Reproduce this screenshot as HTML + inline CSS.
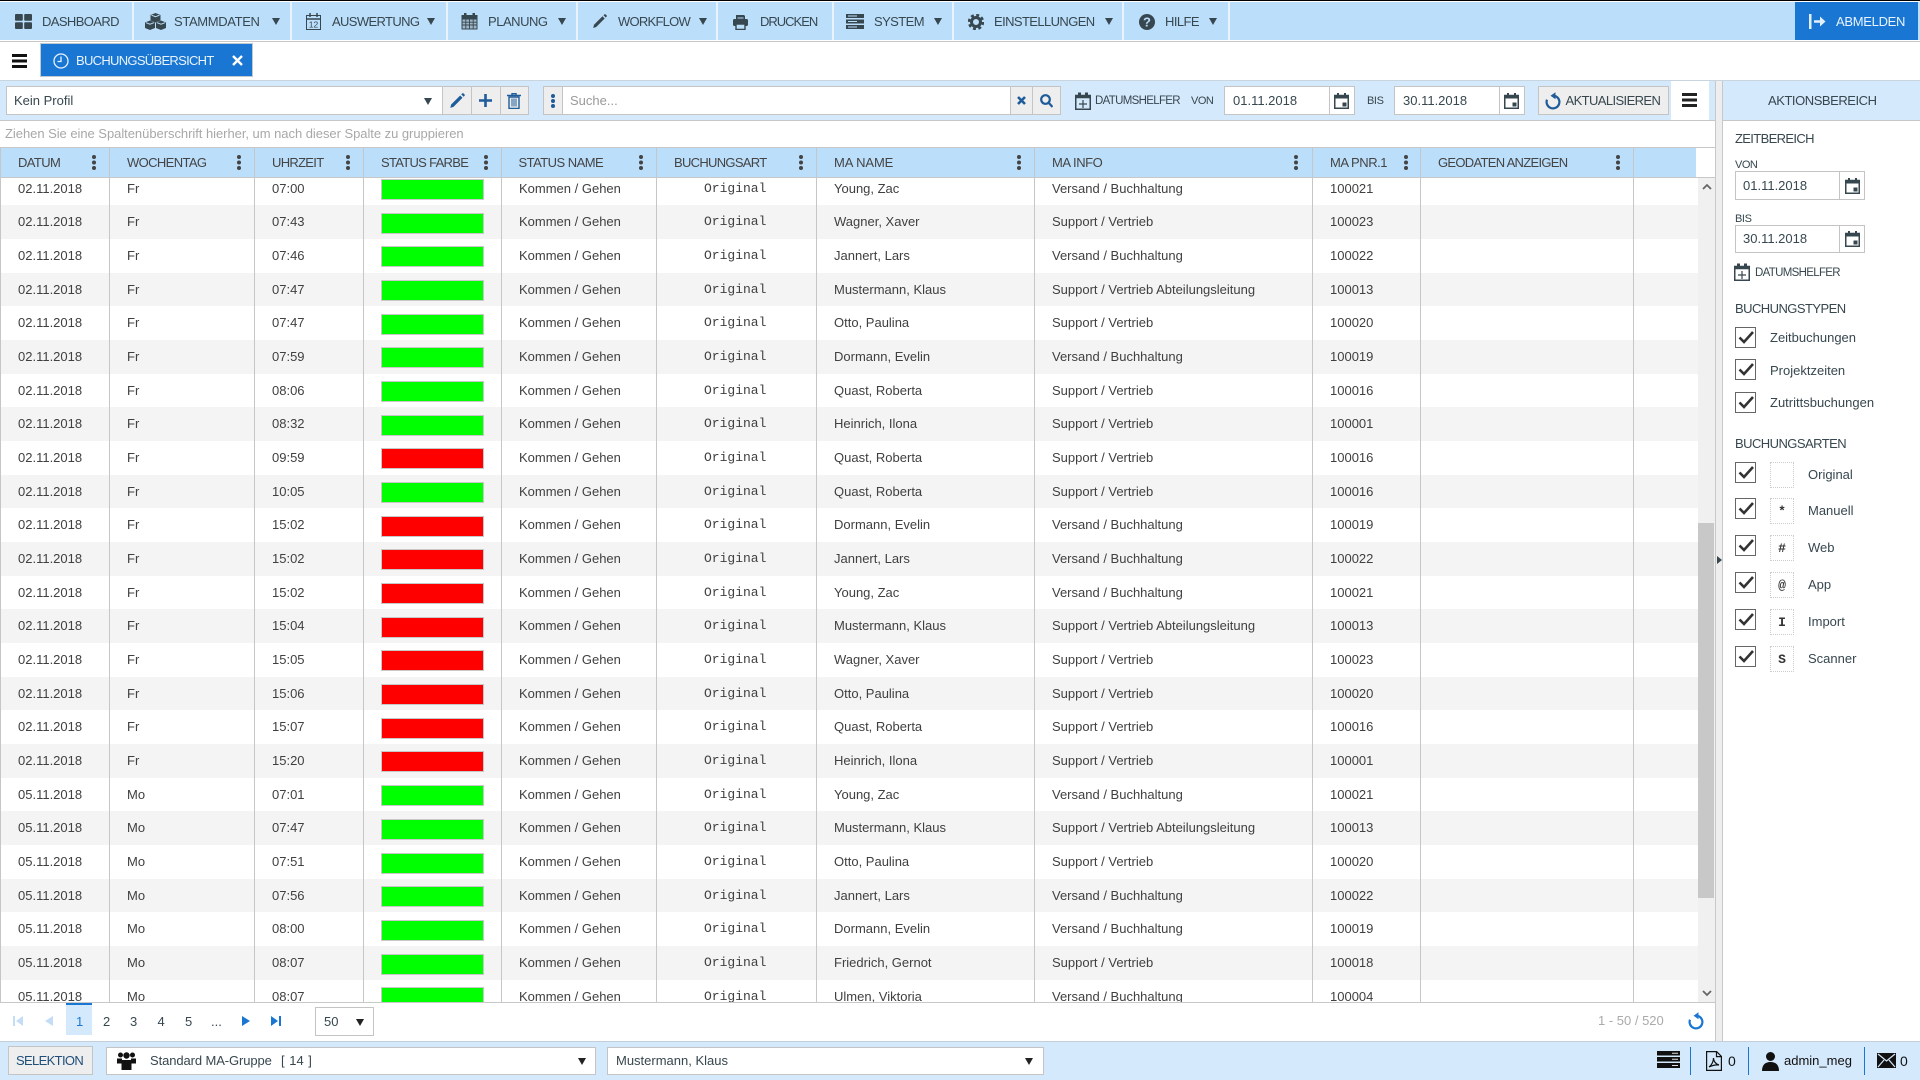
<!DOCTYPE html>
<html lang="de"><head><meta charset="utf-8"><title>Buchungsübersicht</title>
<style>
html,body{margin:0;padding:0;background:#fff}
body{position:relative;width:1920px;height:1080px;overflow:hidden;font:13px/20px "Liberation Sans",sans-serif;color:#404040}
.a,.t,.tri,svg.a,.r{position:absolute}
.t{white-space:nowrap;line-height:20px}
.c{letter-spacing:-.38px;color:#37474f;top:12px}
.h{letter-spacing:-.7px;color:#444}
.box{background:#fff;border:1px solid #c4c4c4;box-sizing:border-box}
.btn{background:#eee;border:1px solid #c4c4c4;box-sizing:border-box}
.tri{width:0;height:0;margin:1px 0 0 1px;border-left:4px solid transparent;border-right:4px solid transparent;border-top:7px solid #37474f}
.sep{position:absolute;top:2px;width:2px;height:38px;background:#e8f3fd}
.g{display:grid;grid-template-columns:109px 145px 109px 138px 155px 160px 218px 278px 108px 213px 65px;position:absolute;left:0;width:1698px}
.g>div{border-left:1px solid #c6c6c6;padding-left:17px;white-space:nowrap;overflow:hidden;box-sizing:border-box;height:100%}
.r{height:33.68px;flex:none;line-height:34.5px;width:1698px;left:0}
.r:nth-child(even){background:#f4f4f4}
.r>div:nth-child(4) b{display:block;margin:7.4px 0 0 0;width:103px;height:21px;box-sizing:border-box;border:1px solid #c8c8c8}
.r>div:nth-child(6){font-family:"Liberation Mono",monospace;padding-left:47px;font-size:13px}
.on b{background:#0f0}.off b{background:#f00}
.k{position:absolute;width:4px;height:4px;border-radius:2px;background:#444;box-shadow:0 5.5px 0 #444,0 11px 0 #444}
.cb{position:absolute;left:1735px;width:21px;height:21px;border:1.5px solid #666;box-sizing:border-box;background:#fff}
.cb svg{position:absolute;left:1px;top:0;overflow:visible}
.dot{position:absolute;left:1770px;width:24px;height:26px;border:1px dotted #ccc;box-sizing:border-box;text-align:center;font:bold 13px/25px "Liberation Mono",monospace;color:#333}
</style></head><body>
<svg width="0" height="0" style="position:absolute"><defs>
<symbol id="cal" viewBox="0 0 15 16"><path d="M.75 2.5h13.5v12.75H.75z" fill="none" stroke="#37474f" stroke-width="1.5"/><path d="M1 2h13v3.5H1zM3 0h2v3H3zM10 0h2v3h-2zM8.5 9.5h4v4h-4z" fill="#37474f"/></symbol>
<symbol id="calp" viewBox="0 0 16 18"><path d="M.75 3.5h14.5v13.75H.75z" fill="none" stroke="#37474f" stroke-width="1.5"/><path d="M1 3h14v3.2H1zM3 .5h3v4H3zM10 .5h3v4h-3zM7.4 8h1.2v3.4H12v1.2H8.6V16H7.4v-3.4H4v-1.2h3.4z" fill="#37474f"/></symbol>
<symbol id="ck" viewBox="0 0 18 18"><path d="M2.5 9.5l4.5 4.5L16 4" fill="none" stroke="#333" stroke-width="2.6"/></symbol>
<symbol id="ref" viewBox="0 0 16 18"><path d="M2 7.7A6.4 6.4 0 1 0 10 3.9" fill="none" stroke="currentColor" stroke-width="2.2"/><path d="M5.5 3.7L10.5 .2v7z" fill="currentColor"/></symbol>
</defs></svg>

<div class="a" style="left:0;top:0;width:1920px;height:1px;background:#000"></div>
<div class="a" style="left:0;top:2px;width:1920px;height:38px;background:#bbdefb"></div>
<div class="a" style="left:0;top:41px;width:1920px;height:1px;background:#c8c8c8"></div>
<div class="sep" style="left:132px"></div><div class="sep" style="left:290px"></div><div class="sep" style="left:446px"></div><div class="sep" style="left:576px"></div><div class="sep" style="left:716px"></div><div class="sep" style="left:832px"></div><div class="sep" style="left:952px"></div><div class="sep" style="left:1122px"></div><div class="sep" style="left:1228px"></div>

<svg class="a" style="left:15px;top:14px" width="17" height="15" viewBox="0 0 17 15" fill="#37474f"><rect width="7.8" height="6.8" rx="1"/><rect x="9.2" width="7.8" height="6.8" rx="1"/><rect y="8.2" width="7.8" height="6.8" rx="1"/><rect x="9.2" y="8.2" width="7.8" height="6.8" rx="1"/></svg>
<div class="t c" style="left:42px;letter-spacing:-.6px">DASHBOARD</div>
<svg class="a" style="left:145px;top:13px" width="21" height="17" viewBox="0 0 21 17" fill="#37474f"><path d="M10.5 0l5 2v5.500l-5 2-5-2V2z"/><path d="M5 7.500l5 2v5.500l-5 2-5-2V9.500z"/><path d="M16 7.500l5 2v5.500l-5 2-5-2V9.500z"/><path d="M6.500 2.200l4 1.500 4-1.500M1 9.700l4 1.500 4-1.500M12 9.700l4 1.500 4-1.500" stroke="#bbdefb" fill="none"/></svg>
<div class="t c" style="left:174px;letter-spacing:-.35px">STAMMDATEN</div><i class="tri" style="left:271px;top:17px"></i>
<svg class="a" style="left:306px;top:13px" width="15" height="17" viewBox="0 0 15 17" fill="none" stroke="#37474f"><rect x=".5" y="2.500" width="14" height="14"/><path d="M.5 6h14M4 0v4M11 0v4" stroke-width="1.500"/><text x="7.500" y="14.500" font-size="8.500" text-anchor="middle" fill="#37474f" stroke="none" font-family="Liberation Sans">12</text></svg>
<div class="t c" style="left:332px;letter-spacing:-.63px">AUSWERTUNG</div><i class="tri" style="left:426px;top:17px"></i>
<svg class="a" style="left:461px;top:13px" width="17" height="17" viewBox="0 0 17 17"><rect x=".5" y="2" width="16" height="14.500" fill="#37474f"/><path d="M3 0h2.500v4H3zM11.500 0H14v4h-2.500z" fill="#37474f"/><path d="M1.500 6.500h14v9h-14z" fill="#9fb5c8"/><path d="M1.500 9.200h14M1.500 12h14M4.800 6.500v9M8.500 6.500v9M12.200 6.500v9" stroke="#37474f" stroke-width=".9"/></svg>
<div class="t c" style="left:488px;letter-spacing:-.47px">PLANUNG</div><i class="tri" style="left:557px;top:17px"></i>
<svg class="a" style="left:592px;top:14px" width="15" height="15" viewBox="0 0 15 15" fill="#37474f"><path d="M10.500 2.300l2.200 2.200L4.200 13 1.200 14 2 10.800zM11.500 1.300l.8-.8a1 1 0 0 1 1.400 0l.8.8a1 1 0 0 1 0 1.400l-.8.8z"/></svg>
<div class="t c" style="left:618px;letter-spacing:-.75px">WORKFLOW</div><i class="tri" style="left:698px;top:17px"></i>
<svg class="a" style="left:733px;top:14px" width="15" height="16" viewBox="0 0 15 16" fill="#37474f"><path d="M3 1h8l1 1v3H3z"/><rect y="5" width="15" height="7" rx="1.500"/><path d="M3 10h9v5.500H3z" fill="#bbdefb" stroke="#37474f" stroke-width="1.400"/><path d="M4.500 4h6" stroke="#bbdefb"/></svg>
<div class="t c" style="left:760px;letter-spacing:-1px">DRUCKEN</div>
<svg class="a" style="left:846px;top:14px" width="18" height="15" viewBox="0 0 18 15"><path d="M0 0h18v4H0zM0 5.500h18v4H0zM0 11h18v4H0z" fill="#37474f"/><path d="M2 2h9M2 7.500h9M2 13h9" stroke="#bbdefb"/></svg>
<div class="t c" style="left:874px;letter-spacing:-.58px">SYSTEM</div><i class="tri" style="left:933px;top:17px"></i>
<svg class="a" style="left:968px;top:14px" width="16" height="16" viewBox="0 0 16 16"><circle cx="8" cy="8" r="4.500" fill="none" stroke="#37474f" stroke-width="3"/><circle cx="8" cy="8" r="7" fill="none" stroke="#37474f" stroke-width="2.400" stroke-dasharray="3 2.500"/></svg>
<div class="t c" style="left:994px;letter-spacing:-.6px">EINSTELLUNGEN</div><i class="tri" style="left:1104px;top:17px"></i>
<svg class="a" style="left:1139px;top:14px" width="16" height="16" viewBox="0 0 16 16"><circle cx="8" cy="8" r="8" fill="#37474f"/><text x="8" y="12.500" font-size="13" font-weight="bold" text-anchor="middle" fill="#bbdefb" font-family="Liberation Sans">?</text></svg>
<div class="t c" style="left:1165px;letter-spacing:-.56px">HILFE</div><i class="tri" style="left:1208px;top:17px"></i>

<div class="a" style="left:1795px;top:2px;width:123px;height:38px;background:#1976d2"></div>
<svg class="a" style="left:1809px;top:14px" width="17" height="15" viewBox="0 0 17 15" fill="#e3f0fc"><path d="M0 0h2.500v15H0zM5 6.300h6V2.500l5.500 5-5.500 5V8.700H5z"/></svg>
<div class="t" style="left:1836px;top:12px;color:#e8f3fd;letter-spacing:-.3px">ABMELDEN</div>

<div class="a" style="left:12px;top:54px;width:15px;height:3px;background:#111;box-shadow:0 5.500px 0 #111,0 11px 0 #111"></div>
<div class="a" style="left:40px;top:43px;width:213px;height:34px;background:#1976d2;border:1px solid #c0c8d0;box-sizing:border-box"></div>
<svg class="a" style="left:53px;top:53px" width="16" height="16" viewBox="0 0 16 16" fill="none" stroke="#e8f3fd" stroke-width="1.300"><circle cx="8" cy="8" r="7"/><path d="M8 3.500V8.500H4.500"/></svg>
<div class="t" style="left:76px;top:51px;color:#e8f3fd;letter-spacing:-.7px">BUCHUNGSÜBERSICHT</div>
<svg class="a" style="left:232px;top:55px" width="11" height="11" viewBox="0 0 11 11"><path d="M1 1l9 9M10 1l-9 9" stroke="#fff" stroke-width="2.400"/></svg>

<!-- toolbar -->
<div class="a" style="left:0;top:80px;width:1920px;height:41px;background:#d5e9fc;border-top:1px solid #c8d4de;border-bottom:1px solid #c8c8c8;box-sizing:border-box"></div>
<div class="a" style="left:1671px;top:81px;width:38px;height:39px;background:#fff"></div>
<div class="a box" style="left:6px;top:86px;width:437px;height:29px"></div>
<div class="t" style="left:14px;top:90.500px;color:#37474f">Kein Profil</div><i class="tri" style="left:423px;top:97px"></i>
<div class="a btn" style="left:442px;top:86px;width:30px;height:29px"></div><div class="a btn" style="left:471px;top:86px;width:30px;height:29px"></div><div class="a btn" style="left:500px;top:86px;width:29px;height:29px"></div>
<svg class="a" style="left:449px;top:93px" width="16" height="16" viewBox="0 0 15 15" fill="#1f5c99"><path d="M10.500 2.300l2.200 2.200L4.200 13 1.200 14 2 10.800zM11.500 1.300l.8-.8a1 1 0 0 1 1.400 0l.8.8a1 1 0 0 1 0 1.400l-.8.8z"/></svg>
<svg class="a" style="left:479px;top:94px" width="13" height="13" viewBox="0 0 13 13"><path d="M5.200 0h2.600v5.200H13v2.600H7.800V13H5.200V7.800H0V5.200h5.200z" fill="#1f5c99"/></svg>
<svg class="a" style="left:507px;top:93px" width="14" height="16" viewBox="0 0 14 16" fill="none" stroke="#1f5c99"><path d="M0 2.500h14M5 2.500V.7h4v1.800" stroke-width="1.400"/><path d="M2 4h10v11.500H2z" stroke-width="1.400"/><path d="M5 5.500v8M7 5.500v8M9 5.500v8"/></svg>
<div class="a btn" style="left:543px;top:86px;width:20px;height:29px"></div>
<div class="k" style="left:551px;top:94px;background:#1f5c99;box-shadow:0 5px 0 #1f5c99,0 10px 0 #1f5c99"></div>
<div class="a box" style="left:562px;top:86px;width:449px;height:29px"></div>
<div class="t" style="left:570px;top:90.500px;color:#9a9a9a">Suche...</div>
<div class="a btn" style="left:1010px;top:86px;width:23px;height:29px"></div><div class="a btn" style="left:1032px;top:86px;width:29px;height:29px"></div>
<svg class="a" style="left:1017px;top:96px" width="9" height="9" viewBox="0 0 9 9"><path d="M1 1l7 7M8 1L1 8" stroke="#1f5c99" stroke-width="2.600"/></svg>
<svg class="a" style="left:1040px;top:94px" width="13" height="14" viewBox="0 0 13 14" fill="none" stroke="#1f5c99" stroke-width="2.200"><circle cx="5.500" cy="5.500" r="4.300"/><path d="M8.500 8.500l4 4.500"/></svg>
<svg class="a" style="left:1075px;top:92px" width="16" height="18"><use href="#calp"/></svg>
<div class="t" style="left:1095px;top:91px;font-size:11.500px;letter-spacing:-.68px;color:#37474f">DATUMSHELFER</div>
<div class="t" style="left:1191px;top:90.500px;font-size:11px;letter-spacing:-.5px;color:#37474f">VON</div>
<div class="a box" style="left:1224px;top:86px;width:106px;height:29px"></div><div class="a box" style="left:1329px;top:86px;width:26px;height:29px"></div>
<div class="t" style="left:1233px;top:90.500px;color:#37474f">01.11.2018</div>
<svg class="a" style="left:1334px;top:93px" width="15" height="16"><use href="#cal"/></svg>
<div class="t" style="left:1367px;top:90.500px;font-size:11px;letter-spacing:-.4px;color:#37474f">BIS</div>
<div class="a box" style="left:1394px;top:86px;width:106px;height:29px"></div><div class="a box" style="left:1499px;top:86px;width:26px;height:29px"></div>
<div class="t" style="left:1403px;top:90.500px;color:#37474f">30.11.2018</div>
<svg class="a" style="left:1504px;top:93px" width="15" height="16"><use href="#cal"/></svg>
<div class="a btn" style="left:1538px;top:86px;width:131px;height:29px"></div>
<svg class="a" style="left:1545px;top:92px;color:#1f5c99" width="16" height="18"><use href="#ref"/></svg>
<div class="t" style="left:1565.500px;top:90.500px;letter-spacing:-.6px;color:#37474f">AKTUALISIEREN</div>
<div class="a" style="left:1682px;top:93px;width:15px;height:3px;background:#222;box-shadow:0 5.500px 0 #222,0 11px 0 #222"></div>

<div class="t" style="left:5px;top:123.500px;color:#a8a8a8;letter-spacing:-.04px">Ziehen Sie eine Spaltenüberschrift hierher, um nach dieser Spalte zu gruppieren</div>

<!-- grid header -->
<div class="a" style="left:0;top:147px;width:1715px;height:1px;background:#c8c8c8"></div>
<div class="a" style="left:0;top:177px;width:1715px;height:1px;background:#c8c8c8"></div>
<div class="a" style="left:0;top:148px;width:1696px;height:29px;background:#bbdefb"></div>
<div class="g h" style="top:148px;height:29px;line-height:30px;width:1696px"><div style="letter-spacing:-.6px">DATUM</div><div style="letter-spacing:-.62px">WOCHENTAG</div><div>UHRZEIT</div><div>STATUS FARBE</div><div style="letter-spacing:-.53px;padding-left:16.500px">STATUS NAME</div><div>BUCHUNGSART</div><div style="letter-spacing:-.1px">MA NAME</div><div style="letter-spacing:-.45px">MA INFO</div><div style="letter-spacing:-.45px">MA PNR.1</div><div>GEODATEN ANZEIGEN</div><div></div></div>
<i class="k" style="left:92px;top:155px"></i><i class="k" style="left:237px;top:155px"></i><i class="k" style="left:346px;top:155px"></i><i class="k" style="left:484px;top:155px"></i><i class="k" style="left:639px;top:155px"></i><i class="k" style="left:799px;top:155px"></i><i class="k" style="left:1017px;top:155px"></i><i class="k" style="left:1294px;top:155px"></i><i class="k" style="left:1404px;top:155px"></i><i class="k" style="left:1616px;top:155px"></i>

<!-- rows -->
<div class="a" style="left:0;top:178px;width:1698px;height:824px;overflow:hidden"><div class="a" style="left:0;top:-6.330px;width:1698px;height:842px;display:flex;flex-direction:column">
<div class="g r" style="position:relative"><div>02.11.2018</div><div>Fr</div><div>07:00</div><div class="on"><b></b></div><div>Kommen / Gehen</div><div>Original</div><div>Young, Zac</div><div>Versand / Buchhaltung</div><div>100021</div><div></div><div></div></div>
<div class="g r" style="position:relative"><div>02.11.2018</div><div>Fr</div><div>07:43</div><div class="on"><b></b></div><div>Kommen / Gehen</div><div>Original</div><div>Wagner, Xaver</div><div>Support / Vertrieb</div><div>100023</div><div></div><div></div></div>
<div class="g r" style="position:relative"><div>02.11.2018</div><div>Fr</div><div>07:46</div><div class="on"><b></b></div><div>Kommen / Gehen</div><div>Original</div><div>Jannert, Lars</div><div>Versand / Buchhaltung</div><div>100022</div><div></div><div></div></div>
<div class="g r" style="position:relative"><div>02.11.2018</div><div>Fr</div><div>07:47</div><div class="on"><b></b></div><div>Kommen / Gehen</div><div>Original</div><div>Mustermann, Klaus</div><div>Support / Vertrieb Abteilungsleitung</div><div>100013</div><div></div><div></div></div>
<div class="g r" style="position:relative"><div>02.11.2018</div><div>Fr</div><div>07:47</div><div class="on"><b></b></div><div>Kommen / Gehen</div><div>Original</div><div>Otto, Paulina</div><div>Support / Vertrieb</div><div>100020</div><div></div><div></div></div>
<div class="g r" style="position:relative"><div>02.11.2018</div><div>Fr</div><div>07:59</div><div class="on"><b></b></div><div>Kommen / Gehen</div><div>Original</div><div>Dormann, Evelin</div><div>Versand / Buchhaltung</div><div>100019</div><div></div><div></div></div>
<div class="g r" style="position:relative"><div>02.11.2018</div><div>Fr</div><div>08:06</div><div class="on"><b></b></div><div>Kommen / Gehen</div><div>Original</div><div>Quast, Roberta</div><div>Support / Vertrieb</div><div>100016</div><div></div><div></div></div>
<div class="g r" style="position:relative"><div>02.11.2018</div><div>Fr</div><div>08:32</div><div class="on"><b></b></div><div>Kommen / Gehen</div><div>Original</div><div>Heinrich, Ilona</div><div>Support / Vertrieb</div><div>100001</div><div></div><div></div></div>
<div class="g r" style="position:relative"><div>02.11.2018</div><div>Fr</div><div>09:59</div><div class="off"><b></b></div><div>Kommen / Gehen</div><div>Original</div><div>Quast, Roberta</div><div>Support / Vertrieb</div><div>100016</div><div></div><div></div></div>
<div class="g r" style="position:relative"><div>02.11.2018</div><div>Fr</div><div>10:05</div><div class="on"><b></b></div><div>Kommen / Gehen</div><div>Original</div><div>Quast, Roberta</div><div>Support / Vertrieb</div><div>100016</div><div></div><div></div></div>
<div class="g r" style="position:relative"><div>02.11.2018</div><div>Fr</div><div>15:02</div><div class="off"><b></b></div><div>Kommen / Gehen</div><div>Original</div><div>Dormann, Evelin</div><div>Versand / Buchhaltung</div><div>100019</div><div></div><div></div></div>
<div class="g r" style="position:relative"><div>02.11.2018</div><div>Fr</div><div>15:02</div><div class="off"><b></b></div><div>Kommen / Gehen</div><div>Original</div><div>Jannert, Lars</div><div>Versand / Buchhaltung</div><div>100022</div><div></div><div></div></div>
<div class="g r" style="position:relative"><div>02.11.2018</div><div>Fr</div><div>15:02</div><div class="off"><b></b></div><div>Kommen / Gehen</div><div>Original</div><div>Young, Zac</div><div>Versand / Buchhaltung</div><div>100021</div><div></div><div></div></div>
<div class="g r" style="position:relative"><div>02.11.2018</div><div>Fr</div><div>15:04</div><div class="off"><b></b></div><div>Kommen / Gehen</div><div>Original</div><div>Mustermann, Klaus</div><div>Support / Vertrieb Abteilungsleitung</div><div>100013</div><div></div><div></div></div>
<div class="g r" style="position:relative"><div>02.11.2018</div><div>Fr</div><div>15:05</div><div class="off"><b></b></div><div>Kommen / Gehen</div><div>Original</div><div>Wagner, Xaver</div><div>Support / Vertrieb</div><div>100023</div><div></div><div></div></div>
<div class="g r" style="position:relative"><div>02.11.2018</div><div>Fr</div><div>15:06</div><div class="off"><b></b></div><div>Kommen / Gehen</div><div>Original</div><div>Otto, Paulina</div><div>Support / Vertrieb</div><div>100020</div><div></div><div></div></div>
<div class="g r" style="position:relative"><div>02.11.2018</div><div>Fr</div><div>15:07</div><div class="off"><b></b></div><div>Kommen / Gehen</div><div>Original</div><div>Quast, Roberta</div><div>Support / Vertrieb</div><div>100016</div><div></div><div></div></div>
<div class="g r" style="position:relative"><div>02.11.2018</div><div>Fr</div><div>15:20</div><div class="off"><b></b></div><div>Kommen / Gehen</div><div>Original</div><div>Heinrich, Ilona</div><div>Support / Vertrieb</div><div>100001</div><div></div><div></div></div>
<div class="g r" style="position:relative"><div>05.11.2018</div><div>Mo</div><div>07:01</div><div class="on"><b></b></div><div>Kommen / Gehen</div><div>Original</div><div>Young, Zac</div><div>Versand / Buchhaltung</div><div>100021</div><div></div><div></div></div>
<div class="g r" style="position:relative"><div>05.11.2018</div><div>Mo</div><div>07:47</div><div class="on"><b></b></div><div>Kommen / Gehen</div><div>Original</div><div>Mustermann, Klaus</div><div>Support / Vertrieb Abteilungsleitung</div><div>100013</div><div></div><div></div></div>
<div class="g r" style="position:relative"><div>05.11.2018</div><div>Mo</div><div>07:51</div><div class="on"><b></b></div><div>Kommen / Gehen</div><div>Original</div><div>Otto, Paulina</div><div>Support / Vertrieb</div><div>100020</div><div></div><div></div></div>
<div class="g r" style="position:relative"><div>05.11.2018</div><div>Mo</div><div>07:56</div><div class="on"><b></b></div><div>Kommen / Gehen</div><div>Original</div><div>Jannert, Lars</div><div>Versand / Buchhaltung</div><div>100022</div><div></div><div></div></div>
<div class="g r" style="position:relative"><div>05.11.2018</div><div>Mo</div><div>08:00</div><div class="on"><b></b></div><div>Kommen / Gehen</div><div>Original</div><div>Dormann, Evelin</div><div>Versand / Buchhaltung</div><div>100019</div><div></div><div></div></div>
<div class="g r" style="position:relative"><div>05.11.2018</div><div>Mo</div><div>08:07</div><div class="on"><b></b></div><div>Kommen / Gehen</div><div>Original</div><div>Friedrich, Gernot</div><div>Support / Vertrieb</div><div>100018</div><div></div><div></div></div>
<div class="g r" style="position:relative"><div>05.11.2018</div><div>Mo</div><div>08:07</div><div class="on"><b></b></div><div>Kommen / Gehen</div><div>Original</div><div>Ulmen, Viktoria</div><div>Versand / Buchhaltung</div><div>100004</div><div></div><div></div></div>
</div></div>

<!-- scrollbar -->
<div class="a" style="left:1698px;top:178px;width:17px;height:824px;background:#f0f0f0"></div>
<div class="a" style="left:1698px;top:523px;width:16px;height:375px;background:#c8c8c8"></div>
<svg class="a" style="left:1702px;top:183px" width="10" height="7" viewBox="0 0 10 7"><path d="M1 6l4-4 4 4" fill="none" stroke="#666" stroke-width="1.800"/></svg>
<svg class="a" style="left:1702px;top:990px" width="10" height="7" viewBox="0 0 10 7"><path d="M1 1l4 4 4-4" fill="none" stroke="#666" stroke-width="1.800"/></svg>
<div class="a" style="left:0;top:1002px;width:1715px;height:1px;background:#c8c8c8"></div>

<!-- splitter -->
<div class="a" style="left:1715px;top:81px;width:8px;height:960px;background:#eee;border-left:1px solid #c8c8c8;border-right:1px solid #c8c8c8;box-sizing:border-box"></div>
<svg class="a" style="left:1717px;top:556px" width="5" height="8" viewBox="0 0 5 8"><path d="M0 0l5 4-5 4z" fill="#37474f"/></svg>

<!-- pager -->
<svg class="a" style="left:13px;top:1016px" width="10" height="10" viewBox="0 0 10 10" fill="#c4dcf5"><path d="M0 0h2v10H0zM10 0v10L3 5z"/></svg>
<svg class="a" style="left:45px;top:1016px" width="8" height="10" viewBox="0 0 8 10" fill="#c4dcf5"><path d="M8 0v10L0 5z"/></svg>
<div class="a" style="left:66px;top:1003px;width:26px;height:32px;background:#d5e9fc;border-top:2px solid #1976d2;box-sizing:border-box"></div>
<div class="t" style="left:76px;top:1012px;color:#1976d2">1</div>
<div class="t" style="left:103px;top:1012px;color:#37474f">2</div>
<div class="t" style="left:130px;top:1012px;color:#37474f">3</div>
<div class="t" style="left:157.500px;top:1012px;color:#37474f">4</div>
<div class="t" style="left:185px;top:1012px;color:#37474f">5</div>
<div class="t" style="left:211px;top:1012px;color:#37474f">...</div>
<svg class="a" style="left:242px;top:1016px" width="8" height="10" viewBox="0 0 8 10" fill="#1976d2"><path d="M0 0v10l8-5z"/></svg>
<svg class="a" style="left:271px;top:1016px" width="10" height="10" viewBox="0 0 10 10" fill="#1976d2"><path d="M8 0h2v10H8zM0 0v10l7-5z"/></svg>
<div class="a box" style="left:315px;top:1007px;width:59px;height:29px"></div>
<div class="t" style="left:324px;top:1011.500px;color:#37474f">50</div><i class="tri" style="left:355px;top:1018px;border-top-color:#222"></i>
<div class="t" style="left:1598px;top:1010.500px;color:#aaa">1 - 50 / 520</div>
<svg class="a" style="left:1688px;top:1012px;color:#1976d2" width="16" height="18"><use href="#ref"/></svg>

<!-- right panel -->
<div class="a" style="left:1723px;top:81px;width:197px;height:39px;background:#d5e9fc"></div>
<div class="t" style="left:1768px;top:90.500px;letter-spacing:-.45px;color:#37474f">AKTIONSBEREICH</div>
<div class="t" style="left:1735px;top:128.500px;letter-spacing:-.65px;color:#37474f">ZEITBEREICH</div>
<div class="t" style="left:1735px;top:155px;font-size:11px;letter-spacing:-.5px;color:#37474f">VON</div>
<div class="a box" style="left:1735px;top:171px;width:105px;height:29px"></div><div class="a box" style="left:1839px;top:171px;width:26px;height:29px"></div>
<div class="t" style="left:1743px;top:176px;color:#37474f">01.11.2018</div>
<svg class="a" style="left:1845px;top:178px" width="15" height="16"><use href="#cal"/></svg>
<div class="t" style="left:1735px;top:209px;font-size:11px;letter-spacing:-.4px;color:#37474f">BIS</div>
<div class="a box" style="left:1735px;top:225px;width:105px;height:28px"></div><div class="a box" style="left:1839px;top:225px;width:26px;height:28px"></div>
<div class="t" style="left:1743px;top:228.500px;color:#37474f">30.11.2018</div>
<svg class="a" style="left:1845px;top:231px" width="15" height="16"><use href="#cal"/></svg>
<svg class="a" style="left:1734px;top:263px" width="16" height="18"><use href="#calp"/></svg>
<div class="t" style="left:1755px;top:263px;font-size:11.500px;letter-spacing:-.68px;color:#37474f">DATUMSHELFER</div>
<div class="t" style="left:1735px;top:299px;letter-spacing:-.55px;color:#37474f">BUCHUNGSTYPEN</div>
<div class="cb" style="top:327px"><svg width="18" height="18"><use href="#ck"/></svg></div><div class="t" style="left:1770px;top:327.500px;color:#37474f">Zeitbuchungen</div>
<div class="cb" style="top:359px"><svg width="18" height="18"><use href="#ck"/></svg></div><div class="t" style="left:1770px;top:360.500px;color:#37474f">Projektzeiten</div>
<div class="cb" style="top:392px"><svg width="18" height="18"><use href="#ck"/></svg></div><div class="t" style="left:1770px;top:392.500px;color:#37474f">Zutrittsbuchungen</div>
<div class="t" style="left:1735px;top:434px;letter-spacing:-.55px;color:#37474f">BUCHUNGSARTEN</div>
<div class="cb" style="top:462px"><svg width="18" height="18"><use href="#ck"/></svg></div><div class="dot" style="top:462px"></div><div class="t" style="left:1808px;top:465px;color:#37474f">Original</div>
<div class="cb" style="top:498px"><svg width="18" height="18"><use href="#ck"/></svg></div><div class="dot" style="top:498px">*</div><div class="t" style="left:1808px;top:500.500px;color:#37474f">Manuell</div>
<div class="cb" style="top:535px"><svg width="18" height="18"><use href="#ck"/></svg></div><div class="dot" style="top:535px">#</div><div class="t" style="left:1808px;top:537.500px;color:#37474f">Web</div>
<div class="cb" style="top:572px"><svg width="18" height="18"><use href="#ck"/></svg></div><div class="dot" style="top:572px">@</div><div class="t" style="left:1808px;top:574.500px;color:#37474f">App</div>
<div class="cb" style="top:609px"><svg width="18" height="18"><use href="#ck"/></svg></div><div class="dot" style="top:609px">I</div><div class="t" style="left:1808px;top:611.500px;color:#37474f">Import</div>
<div class="cb" style="top:646px"><svg width="18" height="18"><use href="#ck"/></svg></div><div class="dot" style="top:646px">S</div><div class="t" style="left:1808px;top:648.500px;color:#37474f">Scanner</div>

<!-- bottom bar -->
<div class="a" style="left:0;top:1041px;width:1920px;height:39px;background:#d5e9fc;border-top:1px solid #c4ced8;box-sizing:border-box"></div>
<div class="a btn" style="left:8px;top:1046px;width:85px;height:29px"></div>
<div class="t" style="left:16px;top:1050.500px;letter-spacing:-.65px;color:#1f4e79">SELEKTION</div>
<div class="a box" style="left:106px;top:1047px;width:490px;height:28px"></div>
<svg class="a" style="left:117px;top:1052px" width="19" height="18" viewBox="0 0 19 18" fill="#111"><circle cx="3.500" cy="3" r="2.500"/><circle cx="15.500" cy="3" r="2.500"/><circle cx="9.500" cy="3.500" r="3.200"/><path d="M0 6.500h5v5H0zM14 6.500h5v5h-5zM4.500 8h10v10h-10z"/></svg>
<div class="t" style="left:150px;top:1050.500px;letter-spacing:-.1px;color:#37474f">Standard MA-Gruppe</div>
<div class="t" style="left:281px;top:1050.500px;color:#37474f;word-spacing:1px">[ 14 ]</div><i class="tri" style="left:577px;top:1057px;border-top-color:#222"></i>
<div class="a box" style="left:607px;top:1047px;width:437px;height:28px"></div>
<div class="t" style="left:616px;top:1050.500px;color:#37474f">Mustermann, Klaus</div><i class="tri" style="left:1024px;top:1057px;border-top-color:#222"></i>
<svg class="a" style="left:1657px;top:1051px" width="23" height="17" viewBox="0 0 23 17"><path d="M0 0h23v4.500H0zM0 6h23v4.500H0zM0 12h23v5H0z" fill="#111"/><path d="M15 2.200h6M15 8.200h6M15 14.500h6" stroke="#ddd"/></svg>
<div class="a" style="left:1690px;top:1047px;width:1px;height:28px;background:#1976d2"></div>
<svg class="a" style="left:1706px;top:1051px" width="16" height="20" viewBox="0 0 16 20" fill="none" stroke="#111" stroke-width="1.200"><path d="M.6.600h10l4.800 4.800v14H.6zM10.500.600v5h5"/><path d="M3 16c3-2 4.500-6 4.500-9 0 3 2 6 5.500 7-3-.5-6 .2-10 2z"/></svg>
<div class="t" style="left:1728px;top:1050.500px;font-size:14px;color:#111">0</div>
<div class="a" style="left:1748px;top:1047px;width:1px;height:28px;background:#1976d2"></div>
<svg class="a" style="left:1762px;top:1052px" width="17" height="19" viewBox="0 0 17 19" fill="#111"><circle cx="8.500" cy="4.500" r="4.500"/><path d="M0 19c0-6 3-9 8.500-9s8.500 3 8.500 9z"/></svg>
<div class="t" style="left:1784px;top:1050.500px;color:#111">admin_meg</div>
<div class="a" style="left:1864px;top:1047px;width:1px;height:28px;background:#1976d2"></div>
<svg class="a" style="left:1877px;top:1053px" width="19" height="15" viewBox="0 0 19 15"><rect width="19" height="15" fill="#111"/><path d="M1 1l8.500 7L18 1M1 14l6-7M18 14l-6-7" fill="none" stroke="#d5e9fc" stroke-width="1.200"/></svg>
<div class="t" style="left:1900px;top:1050.500px;font-size:14px;color:#111">0</div>
</body></html>
